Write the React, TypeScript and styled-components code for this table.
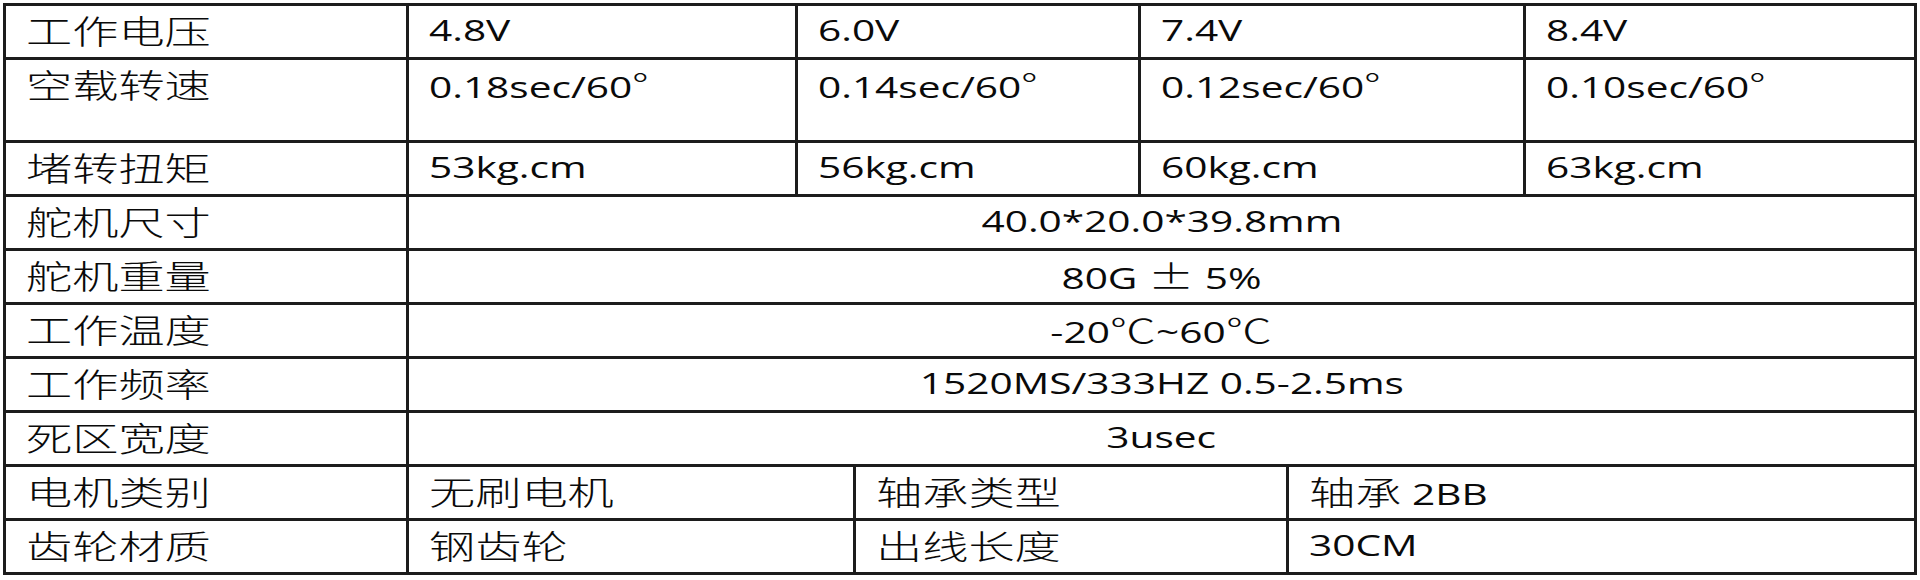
import React from 'react';
import styled, { createGlobalStyle } from 'styled-components';

const GlobalStyle = createGlobalStyle`
  html, body {
    margin: 0;
    padding: 0;
    background: #ffffff;
  }
  body {
    font-family: "Open Sans", "Noto Sans CJK SC", sans-serif;
    color: #0a0a0a;
  }
`;

const Sheet = styled.div`
  width: 1920px;
  height: 580px;
  padding: 3px 3px 0 3px;
  box-sizing: border-box;
`;

const Table = styled.div`
  display: flex;
  flex-direction: column;
  border: 3px solid #1c1c1c;
  border-bottom: none;
`;

const Row = styled.div<{ $cols: string; $height: number }>`
  display: grid;
  grid-template-columns: ${p => p.$cols};
  height: ${p => p.$height}px;
  border-bottom: 3px solid #1c1c1c;
`;

const Cell = styled.div<{ $center?: boolean }>`
  display: flex;
  align-items: flex-start;
  justify-content: ${p => (p.$center ? 'center' : 'flex-start')};
  padding: 5px 0 0 ${p => (p.$center ? 0 : 20)}px;
  border-right: 3px solid #1c1c1c;
  &:last-child {
    border-right: none;
  }
`;

const Stretched = styled.span<{ $center?: boolean }>`
  display: inline-block;
  font-size: 29px;
  line-height: 38px;
  white-space: nowrap;
  transform: scaleX(1.4);
  transform-origin: ${p => (p.$center ? 'center' : 'left')} center;
`;

const Han = styled.span`
  font-family: "Noto Sans CJK SC", sans-serif;
  font-size: 33px;
  font-weight: 300;
`;

const TOP = '403px 389px 343px 385px 1fr';
const WIDE = '403px 1fr';
const BOTTOM = '403px 447px 433px 1fr';

const HAN_RUN = /([\u3000-\u9fff\u00b0\u00b1\u2103]+)/;

function Text({ value, center }: { value: string; center?: boolean }) {
  const parts = value.split(HAN_RUN).filter(Boolean);
  return (
    <Stretched $center={center}>
      {parts.map((part, i) => (HAN_RUN.test(part) ? <Han key={i}>{part}</Han> : part))}
    </Stretched>
  );
}

type Spec = { label: string; cols: string; height: number; values: string[]; center?: boolean };

const rows: Spec[] = [
  { label: '工作电压', cols: TOP, height: 51, values: ['4.8V', '6.0V', '7.4V', '8.4V'] },
  { label: '空载转速', cols: TOP, height: 80, values: ['0.18sec/60°', '0.14sec/60°', '0.12sec/60°', '0.10sec/60°'] },
  { label: '堵转扭矩', cols: TOP, height: 51, values: ['53kg.cm', '56kg.cm', '60kg.cm', '63kg.cm'] },
  { label: '舵机尺寸', cols: WIDE, height: 51, values: ['40.0*20.0*39.8mm'], center: true },
  { label: '舵机重量', cols: WIDE, height: 51, values: ['80G ± 5%'], center: true },
  { label: '工作温度', cols: WIDE, height: 51, values: ['-20℃~60℃'], center: true },
  { label: '工作频率', cols: WIDE, height: 51, values: ['1520MS/333HZ 0.5-2.5ms'], center: true },
  { label: '死区宽度', cols: WIDE, height: 51, values: ['3usec'], center: true },
  { label: '电机类别', cols: BOTTOM, height: 51, values: ['无刷电机', '轴承类型', '轴承 2BB'] },
  { label: '齿轮材质', cols: BOTTOM, height: 51, values: ['钢齿轮', '出线长度', '30CM'] },
];

export default function App() {
  return (
    <Sheet>
      <GlobalStyle />
      <Table>
        {rows.map(r => (
          <Row key={r.label} $cols={r.cols} $height={r.height}>
            <Cell>
              <Text value={r.label} />
            </Cell>
            {r.values.map((v, i) => (
              <Cell key={i} $center={r.center}>
                <Text value={v} center={r.center} />
              </Cell>
            ))}
          </Row>
        ))}
      </Table>
    </Sheet>
  );
}
